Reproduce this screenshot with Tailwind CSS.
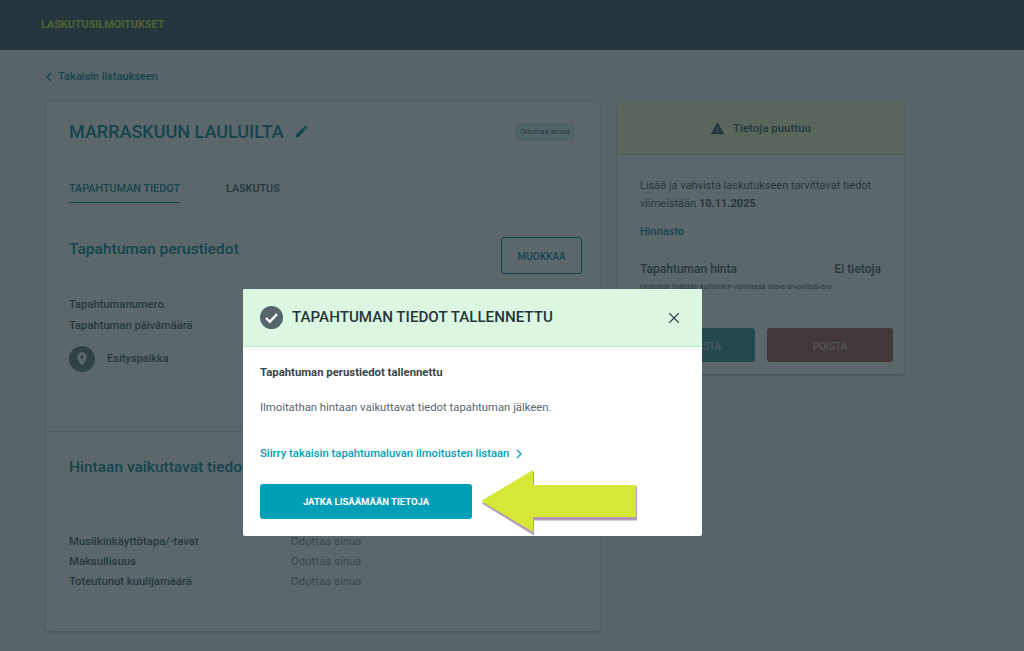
<!DOCTYPE html>
<html lang="fi">
<head>
  <meta charset="UTF-8">
  <title>Laskutusilmoitukset</title>
  <script src="https://cdn.jsdelivr.net/npm/@tailwindcss/browser@4"></script>
</head>
<body class="relative h-[651px] w-[1024px] overflow-hidden bg-[#f2f4f3] font-['Roboto',sans-serif] text-[#3a5563]">

  <!-- Header -->
  <header class="flex h-[50px] items-center bg-[#415161] pl-[41px]">
    <span class="text-[10.8px] font-bold text-[#d5e838]">LASKUTUSILMOITUKSET</span>
  </header>

  <main class="px-[46px]">
    <!-- Back link -->
    <a class="flex h-[52px] items-center gap-[6px] pt-[2px] text-[11px] font-medium text-[#00839a]">
      <svg class="h-[10px] w-[6px]" viewBox="0 0 6 10" fill="none" stroke="currentColor" stroke-width="1.5"><path d="M5 1 1 5l4 4"/></svg>
      Takaisin listaukseen
    </a>

    <div class="flex items-start gap-[17px]">
      <!-- Left card -->
      <section class="h-[529px] w-[554px] rounded-[3px] bg-white shadow-[0_1px_3px_rgba(0,0,0,0.3)]">
        <div class="h-[330px] border-b border-[#d5d9da] px-[23px]">
          <div class="flex h-[59px] items-center justify-between pr-[3px]">
            <div class="flex items-center gap-[10px]">
              <h1 class="text-[18px] font-medium text-[#00839a]">MARRASKUUN LAULUILTA</h1>
              <svg class="h-[15px] w-[15px] text-[#00839a]" viewBox="0 0 24 24" fill="currentColor"><path d="M3 17.25V21h3.75L17.81 9.94l-3.75-3.75L3 17.25zM20.71 7.04a1 1 0 0 0 0-1.41l-2.34-2.34a1 1 0 0 0-1.41 0l-1.83 1.83 3.75 3.75 1.83-1.83z"/></svg>
            </div>
            <span class="rounded-[3px] border border-[#b5e3ea] bg-[#e3f5f8] px-[3px] py-[1px] text-[8px] text-[#3a5563]">Odottaa sinua</span>
          </div>
          <div class="mt-[20px] flex gap-[46px] text-[10.8px] font-medium">
            <span class="border-b border-[#00839a] pb-[5px] text-[#00839a]">TAPAHTUMAN TIEDOT</span>
            <span>LASKUTUS</span>
          </div>
          <div class="-mr-[5px] mt-[34px] flex items-start justify-between">
            <h2 class="mt-[1px] text-[15.5px] font-medium text-[#00839a]">Tapahtuman perustiedot</h2>
            <button class="h-[37px] w-[81px] rounded-[3px] border border-[#00839a] pt-[1px] text-[10px] font-medium text-[#00839a]">MUOKKAA</button>
          </div>
          <div class="mt-[24px] space-y-[8px] text-[11.2px] font-medium">
            <p class="leading-[13px]">Tapahtumanumero</p>
            <p class="leading-[13px]">Tapahtuman päivämäärä</p>
          </div>
          <div class="mt-[14px] flex items-center gap-[12px]">
            <span class="flex h-[26px] w-[26px] items-center justify-center rounded-full bg-[#6a7b82]">
              <svg class="h-[16px] w-[16px] text-white" viewBox="0 0 24 24" fill="currentColor"><path fill-rule="evenodd" d="M12 2a7 7 0 0 0-7 7c0 5.2 7 13 7 13s7-7.800 7-13a7 7 0 0 0-7-7zm0 9.500a2.500 2.500 0 1 1 0-5 2.500 2.500 0 0 1 0 5z"/></svg>
            </span>
            <span class="text-[11px] font-medium">Esityspaikka</span>
          </div>
        </div>
        <div class="px-[23px]">
          <h2 class="mt-[24px] text-[15.5px] font-medium text-[#00839a]">Hintaan vaikuttavat tiedot</h2>
          <dl class="mt-[56px] grid grid-cols-[222px_1fr] gap-y-[7px] text-[11.3px] leading-[13px]">
            <dt class="font-medium">Musiikinkäyttötapa/-tavat</dt><dd class="text-[#7d8c92]">Odottaa sinua</dd>
            <dt class="font-medium">Maksullisuus</dt><dd class="text-[#7d8c92]">Odottaa sinua</dd>
            <dt class="font-medium">Toteutunut kuulijamäärä</dt><dd class="text-[#7d8c92]">Odottaa sinua</dd>
          </dl>
        </div>
      </section>

      <!-- Right card -->
      <aside class="mt-[1px] h-[271px] w-[287px] rounded-[3px] bg-white shadow-[0_1px_3px_rgba(0,0,0,0.3)]">
        <div class="flex h-[52px] items-center justify-center gap-[8px] border-b border-[#d5d9da] bg-[#fbf7c8]">
          <svg class="h-[15px] w-[15px]" viewBox="0 0 24 24" fill="currentColor"><path d="M1 21h22L12 2 1 21zm12-3h-2v-2h2v2zm0-4h-2v-4h2v4z"/></svg>
          <span class="text-[11.5px] font-medium">Tietoja puuttuu</span>
        </div>
        <div class="px-[23px] pt-[22px]">
          <p class="text-[11px] leading-[18px]">Lisää ja vahvista laskutukseen tarvittavat tiedot<br>viimeistään <b class="font-bold">10.11.2025</b>.</p>
          <a class="mt-[11px] block text-[11px] font-medium text-[#00839a]">Hinnasto</a>
          <div class="mt-[19px] flex justify-between text-[12px] font-medium"><span>Tapahtuman hinta</span><span>Ei tietoja</span></div>
          <p class="mt-[3px] text-[7.5px]">Hintoihin lisätään kulloinkin voimassa oleva arvonlisävero.</p>
          <div class="mt-[36px] flex gap-[12px]">
            <button class="h-[34px] w-[115px] shrink-0 rounded-[3px] bg-[#3f8f9f] pt-[3px] text-[10px] font-medium text-white/60">VAHVISTA</button>
            <button class="h-[34px] w-[126px] shrink-0 rounded-[3px] bg-[#a85650] pt-[3px] text-[10px] font-medium text-white/60">POISTA</button>
          </div>
        </div>
      </aside>
    </div>
  </main>

  <!-- Overlay -->
  <div class="absolute inset-0 bg-[#1c2c30]/72"></div>

  <!-- Modal -->
  <div class="absolute left-[243px] top-[289px] w-[459px] overflow-hidden rounded-[2px] bg-white">
    <div class="flex h-[58px] items-center justify-between border-b border-[#b6eec4] bg-[#dbf7e1] pl-[17px] pr-[23px]">
      <div class="flex items-center gap-[9px]">
        <svg class="h-[23px] w-[23px]" viewBox="0 0 23 23"><circle cx="11.500" cy="11.500" r="11.500" fill="#56646b"/><path d="M6 12l3.800 3.800L17 8.200" fill="none" stroke="#fff" stroke-width="2.400"/></svg>
        <span class="text-[15.15px] font-medium text-[#25343b]">TAPAHTUMAN TIEDOT TALLENNETTU</span>
      </div>
      <svg class="h-[10px] w-[10px]" viewBox="0 0 10 10" fill="none" stroke="#25343b" stroke-width="1.200"><path d="M0 0l10 10M10 0 0 10"/></svg>
    </div>
    <div class="px-[17px]">
      <p class="mt-[19px] text-[11.35px] font-bold leading-[13px] text-[#37444b]">Tapahtuman perustiedot tallennettu</p>
      <p class="mt-[22px] text-[11.3px] leading-[13px] text-[#5a666c]">Ilmoitathan hintaan vaikuttavat tiedot tapahtuman jälkeen.</p>
      <a class="mt-[33px] flex items-center gap-[7px] text-[11.3px] font-medium leading-[13px] text-[#00a0b8]">
        Siirry takaisin tapahtumaluvan ilmoitusten listaan
        <svg class="h-[10px] w-[6px]" viewBox="0 0 6 10" fill="none" stroke="currentColor" stroke-width="1.300"><path d="M1 1l4 4-4 4"/></svg>
      </a>
      <button class="mb-[17px] mt-[24px] block h-[35px] w-[212px] rounded-[3px] bg-[#009fb7] pt-[2px] text-[9.500px] font-bold text-white">JATKA LISÄÄMÄÄN TIETOJA</button>
    </div>
  </div>

  <!-- Annotation arrow -->
  <svg class="absolute left-[478px] top-[468px] h-[68px] w-[162px]" viewBox="0 0 162 68">
    <polygon points="3,34 55,2 55,17 158,17 158,51 55,51 55,66" fill="#b39ab8" transform="translate(1 1.500)"/>
    <polygon points="3,33 55,2 55,17 158,17 158,49 55,49 55,64" fill="#d5e838"/>
  </svg>
</body>
</html>
